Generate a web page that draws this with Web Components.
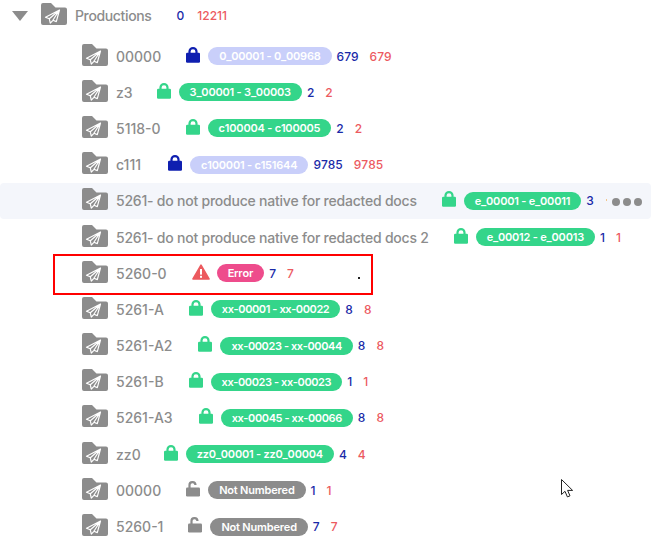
<!DOCTYPE html>
<html>
<head>
<meta charset="utf-8">
<style>
  html, body { margin: 0; padding: 0; background: #fff; overflow: hidden; }
  body { width: 651px; height: 540px; font-family: Inter, "Liberation Sans", sans-serif; position: relative; }
</style>
</head>
<body>
<prod-tree>
  <prod-row slot="root" root name="Productions" n1="0" n2="12211"></prod-row>
  <prod-row name="00000" lock="blue" badge="0_00001 - 0_00968" kind="blue" n1="679" n2="679"></prod-row>
  <prod-row style="--lead:24px" name="z3" lock="green" badge="3_00001 - 3_00003" kind="green" n1="2" n2="2"></prod-row>
  <prod-row name="5118-0" lock="green" badge="c100004 - c100005" kind="green" n1="2" n2="2"></prod-row>
  <prod-row style="--lead:27px" name="c111" lock="blue" badge="c100001 - c151644" kind="blue" n1="9785" n2="9785"></prod-row>
  <prod-row hover tight name="5261- do not produce native for redacted docs" lock="green" badge="e_00001 - e_00011" kind="green" n1="3"></prod-row>
  <prod-row tight name="5261- do not produce native for redacted docs 2" lock="green" badge="e_00012 - e_00013" kind="green" n1="1" n2="1"></prod-row>
  <prod-row marked name="5260-0" lock="error" badge="Error" kind="error" n1="7" n2="7"></prod-row>
  <prod-row narrow name="5261-A" lock="green" badge="xx-00001 - xx-00022" kind="green" n1="8" n2="8"></prod-row>
  <prod-row narrow style="--lead:26px" name="5261-A2" lock="green" badge="xx-00023 - xx-00044" kind="green" n1="8" n2="8"></prod-row>
  <prod-row narrow name="5261-B" lock="green" badge="xx-00023 - xx-00023" kind="green" n1="1" n2="1"></prod-row>
  <prod-row narrow style="--lead:26px" name="5261-A3" lock="green" badge="xx-00045 - xx-00066" kind="green" n1="8" n2="8"></prod-row>
  <prod-row style="--lead:23px" name="zz0" lock="green" badge="zz0_00001 - zz0_00004" kind="green" n1="4" n2="4"></prod-row>
  <prod-row name="00000" lock="open" badge="Not Numbered" kind="gray" n1="1" n2="1"></prod-row>
  <prod-row name="5260-1" lock="open" badge="Not Numbered" kind="gray" n1="7" n2="7"></prod-row>
</prod-tree>
<mouse-cursor></mouse-cursor>

<script>
const FOLDER = `<svg width="26" height="22" viewBox="0 0 26 22">
  <path fill="#8c8c8c" d="M0 2a2 2 0 0 1 2-2h8l4.5 4.4H24a2 2 0 0 1 2 2V20a2 2 0 0 1-2 2H2a2 2 0 0 1-2-2z"/>
  <path fill="none" stroke="#fff" stroke-width="1.2" stroke-linejoin="round" d="M18.5 7 4.5 14.2l3.8 1.6 1 4.4 2.6-2.9 3.4 1.3zM18.5 7 8.3 15.8M18.5 7 11.9 17.3"/>
</svg>`

const LOCKS = {
  blue: `<svg width="14" height="16" viewBox="0 0 14 16"><path fill="none" stroke="#0f1fb0" stroke-width="2.2" d="M3.5 7V4.6a3.5 3.5 0 0 1 7 0V7"/><rect y="5.8" width="14" height="10" rx="1.2" fill="#0f1fb0"/></svg>`,
  green: `<svg width="14" height="16" viewBox="0 0 14 16"><path fill="none" stroke="#34d58a" stroke-width="2.2" d="M3.5 7V4.6a3.5 3.5 0 0 1 7 0V7"/><rect y="5.8" width="14" height="10" rx="1.2" fill="#34d58a"/></svg>`,
  open: `<svg width="14" height="16" viewBox="0 0 14 16"><path fill="none" stroke="#8c8c8c" stroke-width="2.2" d="M3.5 7V4.4a3 3 0 0 1 6-.4"/><rect y="6.5" width="14" height="9" rx="1.2" fill="#8c8c8c"/></svg>`,
  error: `<svg width="18" height="16" viewBox="0 0 18 16"><path fill="#ec5a5f" stroke="#ec5a5f" stroke-width="1.6" stroke-linejoin="round" d="M9 1.2 17 15H1z"/><rect x="8" y="5" width="2" height="5.6" fill="#fff"/><rect x="8" y="11.8" width="2" height="2" fill="#fff"/></svg>`
}

class ProdTree extends HTMLElement {
  constructor() {
    super()
    this.attachShadow({mode: 'open'})
    this.shadowRoot.innerHTML = `
      <style>
        :host { display: block; position: relative; }
        .rows { display: flex; flex-direction: column; padding-top: 3px; }
        ::slotted([slot="root"]) { margin-bottom: 5px; }
        .mark { position: absolute; left: 53px; top: 254px; width: 320px; height: 41px; box-sizing: border-box; border: 2px solid #f00; pointer-events: none; }
      </style>
      <slot name="root"></slot>
      <div class="rows"><slot></slot></div>
      <div class="mark"></div>`
  }
}

class ProdRow extends HTMLElement {
  constructor() {
    super()
    this.attachShadow({mode: 'open'})
  }
  connectedCallback() {
    const a = n => this.getAttribute(n)
    const lock = a('lock')
    this.shadowRoot.innerHTML = `
      <style>
        :host { display: flex; align-items: center; height: 36.2px; padding-left: 82px; white-space: nowrap; position: relative; }
        :host([root]) { padding-left: 41px; height: 30px; }
        :host([hover]) { background: #f4f6fb; border-radius: 4px; }
        .arrow { position: absolute; left: 12px; top: 11px; width: 0; height: 0; border: 8px solid transparent; border-top: 10px solid #8c8c8c; border-bottom: 0; }
        svg { display: block; flex: none; }
        .folder { margin-right: 8px; margin-top: -3px; }
        .name { font-size: 14px; font-weight: 500; color: #8c8c8c; }
        :host([root]) .name { letter-spacing: -.36px; margin-right: 25px; }
        :host([tight]) .name { letter-spacing: -.22px; }
        .lock { margin-left: var(--lead, 25px); margin-right: 8px; margin-top: -3px; }
        .lock.error { margin-right: 7px; margin-top: -2px; }
        .badge { font-size: 11px; font-weight: 600; color: #fff; height: 18px; line-height: 18px; padding: 0 11px; border-radius: 9px; letter-spacing: -.2px; font-kerning: none; }
        :host([narrow]) .badge { letter-spacing: -.4px; }
        .badge.green { background: #34d58a; }
        .badge.blue { background: #c9cffa; }
        .badge.gray { background: #8c8c8c; }
        .badge.error { background: #ee4c8c; }
        .n1, .n2 { font-size: 12px; font-weight: 500; font-kerning: none; }
        .n1 { color: #1a2aa8; margin-left: 5px; }
        .n2 { color: #ec5a5f; margin-left: 11px; }
        :host([root]) .n1 { margin-left: 0; }
        :host([root]) .n2 { margin-left: 13px; }
        .more { position: absolute; right: 9px; top: 50%; margin-top: -3px; display: flex; gap: 3px; }
        .more i { width: 8px; height: 8px; border-radius: 50%; background: #8c8c8c; }
        .tick { position: absolute; left: 606px; top: 16px; width: 1px; height: 2px; background: #f3c58a; }
        .dot { position: absolute; left: 358px; top: 22px; width: 2px; height: 2px; background: #222; }
      </style>
      ${this.hasAttribute('root') ? '<div class="arrow"></div>' : ''}
      <div class="folder">${FOLDER}</div>
      <div class="name">${a('name')}</div>
      ${lock ? `<div class="lock ${lock}">${LOCKS[lock]}</div>` : ''}
      ${a('badge') ? `<div class="badge ${a('kind')}">${a('badge')}</div>` : ''}
      <div class="n1">${a('n1')}</div>
      ${a('n2') ? `<div class="n2">${a('n2')}</div>` : ''}
      ${this.hasAttribute('hover') ? '<div class="tick"></div><div class="more"><i></i><i></i><i></i></div>' : ''}
      ${this.hasAttribute('marked') ? '<div class="dot"></div>' : ''}`
  }
}

class MouseCursor extends HTMLElement {
  constructor() {
    super()
    this.attachShadow({mode: 'open'})
    this.shadowRoot.innerHTML = `
      <style>:host { position: absolute; left: 561px; top: 479px; display: block; }</style>
      <svg width="14" height="20" viewBox="0 0 14 20" style="display:block"><path fill="#fff" stroke="#222" stroke-width="1" d="M.5.5v15l3.5-3.2 2.4 5.6 2.6-1.1-2.4-5.4h5z"/></svg>`
  }
}

customElements.define('prod-tree', ProdTree)
customElements.define('prod-row', ProdRow)
customElements.define('mouse-cursor', MouseCursor)
</script>
</body>
</html>
